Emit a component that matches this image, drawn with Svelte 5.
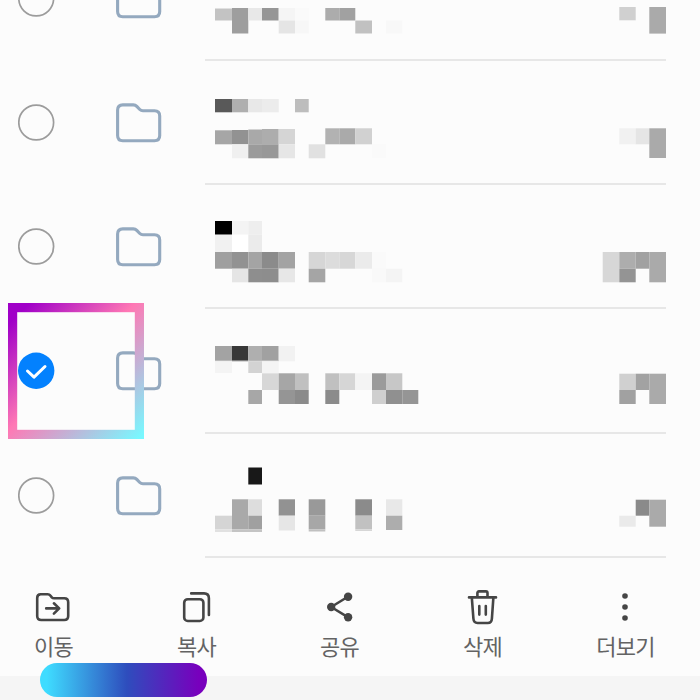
<script>
  // Column edges shared by all blurred-out names and counts
  const cols = [215, 232, 248.3, 262, 278.7, 295, 308.7, 325.3, 339.3, 355.3, 372, 386, 402.3, 418.3, 602.7, 619.3, 635.7, 649.3, 666];

  // block: [first column, last column, top, bottom, shade]
  let rows = [
    {
      selected: false,
      blocks: [
        [0, 1, 71.5, 83.5, '#c3c3c3'], [1, 2, 71, 96.5, '#9e9e9e'], [2, 3, 71, 83.5, '#e8e8e8'],
        [3, 4, 71, 83.5, '#969696'], [4, 5, 71, 83.5, '#f5f5f5'], [5, 6, 71, 83.5, '#fafafa'],
        [4, 5, 83.5, 96.5, '#e5e5e5'], [5, 6, 83.5, 96.5, '#f7f7f7'],
        [7, 8, 71, 83.5, '#acacac'], [8, 9, 71, 83.5, '#a1a1a1'], [9, 10, 83.5, 96.5, '#c1c1c1'],
        [11, 12, 83.5, 96.5, '#f8f8f8'],
        [15, 16, 70, 83.3, '#d0d0d0'], [17, 18, 70, 96.6, '#aaaaaa']
      ]
    },
    {
      selected: false,
      blocks: [
        [0, 1, 38, 51.3, '#595959'], [1, 2, 38, 51.3, '#afafaf'], [2, 3, 38, 51.3, '#e8e8e8'],
        [3, 4, 38, 51.3, '#ececec'], [5, 6, 38, 51.3, '#bdbdbd'],
        [0, 1, 69.3, 83.3, '#a6a6a6'], [1, 2, 69, 83.3, '#929292'], [2, 3, 68.5, 83.3, '#a9a9a9'],
        [3, 4, 68, 83.3, '#adadad'], [4, 5, 68, 83.3, '#d5d5d5'],
        [1, 2, 83.3, 97.3, '#f0f0f0'], [2, 3, 83.3, 97.3, '#9b9b9b'], [3, 4, 83.3, 97.3, '#989898'],
        [4, 5, 83.3, 97.3, '#e6e6e6'], [6, 7, 83.3, 97.3, '#e1e1e1'],
        [7, 8, 67.3, 83.3, '#b2b2b2'], [8, 9, 67.3, 83.3, '#aaaaaa'], [9, 10, 67.3, 83.3, '#d1d1d1'],
        [10, 11, 83.3, 97.3, '#fafafa'],
        [15, 16, 67.3, 83.3, '#f1f1f1'], [16, 17, 67.3, 83.3, '#e5e5e5'], [17, 18, 67.3, 97, '#aaaaaa']
      ]
    },
    {
      selected: false,
      blocks: [
        [0, 1, 36, 49.7, '#000000'], [1, 2, 36, 49.7, '#f4f4f4'], [2, 3, 36, 49.7, '#eeeeee'],
        [0, 1, 49.7, 67, '#f1f1f1'], [1, 2, 49.7, 67, '#ffffff'], [2, 3, 49.7, 67, '#ebebeb'],
        [0, 1, 67, 83.7, '#9f9f9f'], [1, 2, 67, 83.7, '#929292'], [2, 3, 67, 83.7, '#a4a4a4'],
        [3, 4, 67, 83.7, '#8b8b8b'], [4, 5, 67, 83.7, '#a3a3a3'],
        [1, 2, 83.7, 97.3, '#e5e5e5'], [2, 3, 83.7, 97.3, '#8e8e8e'], [3, 4, 83.7, 97.3, '#8d8d8d'],
        [4, 5, 83.7, 97.3, '#e7e7e7'],
        [6, 7, 67, 83.7, '#d6d6d6'], [7, 8, 67, 83.7, '#dcdcdc'], [8, 9, 67, 83.7, '#d7d7d7'],
        [9, 10, 67, 83.7, '#ebebeb'], [10, 11, 67, 83.7, '#fafafa'], [6, 7, 83.7, 97.3, '#a5a5a5'],
        [10, 11, 83.7, 97.3, '#f9f9f9'], [11, 12, 83.7, 97.3, '#f4f4f4'],
        [14, 15, 67, 97.3, '#d7d7d7'], [15, 16, 67, 83.7, '#adadad'], [16, 17, 67, 83.7, '#a1a1a1'],
        [15, 16, 83.7, 97.3, '#949494'], [17, 18, 67, 97.3, '#aaaaaa']
      ]
    },
    {
      selected: true,
      blocks: [
        [0, 1, 37, 51, '#a3a3a3'], [1, 2, 37, 51, '#383838'], [2, 3, 37, 51, '#afafaf'],
        [3, 4, 37, 51, '#a1a1a1'], [4, 5, 37, 52.3, '#f2f2f2'],
        [0, 1, 51, 52.3, '#bababa'], [1, 2, 51, 52.3, '#808080'], [2, 4, 51, 52.3, '#bababa'],
        [0, 1, 52.3, 64, '#f4f4f4'], [2, 3, 52.3, 64, '#d3d3d3'], [3, 4, 52.3, 64, '#f4f4f4'],
        [3, 4, 64.3, 81, '#d7d7d7'], [4, 5, 64.3, 81, '#a6a6a6'], [5, 6, 64.3, 81, '#c0c0c0'],
        [2, 3, 81, 95, '#a7a7a7'], [4, 5, 81, 95, '#959595'], [5, 6, 81, 95, '#8b8b8b'],
        [7, 8, 64.3, 81, '#c0c0c0'], [8, 9, 64.3, 81, '#d6d6d6'], [9, 10, 64.3, 81, '#f4f4f4'],
        [10, 11, 64.3, 81, '#9b9b9b'], [11, 12, 64.3, 81, '#c7c7c7'],
        [7, 8, 81, 95, '#8b8b8b'], [10, 11, 81, 95, '#cfcfcf'], [11, 12, 81, 95, '#909090'],
        [12, 13, 81, 95, '#959595'],
        [15, 16, 64.7, 81, '#d0d0d0'], [16, 17, 64.7, 81, '#a2a2a2'], [15, 16, 81, 95, '#a1a1a1'],
        [17, 18, 64.7, 95, '#aaaaaa']
      ]
    },
    {
      selected: false,
      blocks: [
        [2, 3, 33.5, 50.5, '#181818'],
        [0, 1, 81.7, 95.3, '#d5d5d5'], [0, 1, 95.3, 98, '#e1e1e1'],
        [1, 2, 65.3, 95.3, '#a9a9a9'], [2, 3, 65.3, 81.7, '#dddddd'], [2, 3, 81.7, 95.3, '#a0a0a0'],
        [1, 3, 95.3, 98, '#c4c4c4'],
        [4, 5, 65.3, 81.7, '#929292'], [4, 5, 81.7, 96.5, '#e6e6e6'],
        [6, 7, 65.3, 81.7, '#999999'], [6, 7, 81.7, 95.3, '#a7a7a7'], [6, 7, 95.3, 97.5, '#c0c0c0'],
        [9, 10, 65.3, 81.7, '#8b8b8b'], [9, 10, 81.7, 95.3, '#c1c1c1'], [9, 10, 95.3, 97, '#d6d6d6'],
        [11, 12, 65.3, 81.7, '#e8e8e8'], [11, 12, 81.7, 96, '#adadad'],
        [16, 17, 65.7, 81.7, '#8a8a8a'], [15, 16, 81.7, 92.7, '#eaeaea'], [17, 18, 65.7, 92.7, '#aaaaaa']
      ]
    }
  ];

  const actions = [
    { id: 'move', label: '이동' },
    { id: 'copy', label: '복사' },
    { id: 'share', label: '공유' },
    { id: 'delete', label: '삭제' },
    { id: 'more', label: '더보기' }
  ];

  function toggle(row) {
    row.selected = !row.selected;
    rows = rows;
  }
</script>

<div class="screen">
  <div class="list">
    {#each rows as row}
      <div class="row">
        <button class="check" class:selected={row.selected} on:click={() => toggle(row)} aria-label="select">
          <svg width="37" height="37" viewBox="0 0 37 37">
            {#if row.selected}
              <circle cx="18.2" cy="18.7" r="18.2" />
              <path d="M9.5 19 L16 25.2 L27 14.5" />
            {:else}
              <circle cx="18.2" cy="18.5" r="17.4" />
            {/if}
          </svg>
        </button>
        <svg class="folder" width="46" height="40" viewBox="0 0 46 40">
          <path d="M6.8 1.9 H17.3 Q19.4 1.9 20.8 3.4 L23.8 6.5 Q25.1 7.8 27 7.8 H38.5 Q43.7 7.8 43.7 13 V32.6 Q43.7 37.8 38.5 37.8 H6.8 Q1.6 37.8 1.6 32.6 V7.1 Q1.6 1.9 6.8 1.9 Z" />
        </svg>
        <div class="info">
          <svg width="461" height="110" viewBox="205 0 461 110">
            {#each row.blocks as [from, to, top, bottom, shade]}
              <rect x={cols[from]} y={top} width={cols[to] - cols[from]} height={bottom - top} fill={shade} />
            {/each}
          </svg>
        </div>
      </div>
    {/each}
  </div>

  <div class="toolbar">
    {#each actions as action}
      <button class="action">
        <svg class="icon" width="40" height="40" viewBox="0.8 0 40 40">
          {#if action.id === 'move'}
            <path d="M7.5 7.2 H14.5 Q16.2 7.2 17.2 8.6 L18.6 10.3 Q19.4 11.3 21 11.3 H31 Q35 11.3 35 15.3 V29 Q35 33 31 33 H8 Q4 33 4 29 V11 Q4 7.2 7.5 7.2 Z" />
            <path d="M13 21.4 H25.5 M20.7 16.3 L26 21.4 L20.7 26.6" />
          {:else if action.id === 'copy'}
            <rect x="8" y="12.2" width="19.2" height="21.8" rx="3.6" />
            <path d="M15 6.4 H27.8 Q32.7 6.4 32.7 11.3 V28" />
          {:else if action.id === 'share'}
            <path d="M29 9.5 L12 20 L29 30.3" />
            <circle class="dot" cx="28.9" cy="9.7" r="4.2" />
            <circle class="dot" cx="12" cy="20" r="4.2" />
            <circle class="dot" cx="28.9" cy="30.3" r="4.2" />
          {:else if action.id === 'delete'}
            <path d="M6.8 10.4 H33.8 M15.2 10 V6 Q15.2 4.4 16.8 4.4 H23.7 Q25.3 4.4 25.3 6 V10" />
            <path d="M9.6 10.4 L11.2 31.5 Q11.5 36 15.4 36 H25.6 Q29.5 36 29.7 31.5 L31.2 10.4 M17.1 19 V27.6 M23.6 19 V27.6" />
          {:else}
            <circle class="dot" cx="19.8" cy="9" r="2.8" />
            <circle class="dot" cx="19.8" cy="20" r="2.8" />
            <circle class="dot" cx="19.8" cy="31" r="2.8" />
          {/if}
        </svg>
        <span class="label">{action.label}</span>
      </button>
    {/each}
  </div>

  <svg class="highlight-box" width="136" height="136" viewBox="0 0 136 136">
    <defs>
      <linearGradient id="frame" gradientUnits="userSpaceOnUse" x1="0" y1="0" x2="136" y2="136">
        <stop offset="0.08" stop-color="#a000c8" />
        <stop offset="0.47" stop-color="#ff78b4" />
        <stop offset="0.98" stop-color="#78f8ff" />
      </linearGradient>
    </defs>
    <rect x="4.6" y="4.6" width="126.8" height="126.8" fill="none" stroke="url(#frame)" stroke-width="9.2" />
  </svg>
  <div class="highlight-pill"></div>
</div>

<style>
  :global(body) {
    margin: 0;
    background: #f5f5f5;
  }

  .screen {
    position: relative;
    width: 700px;
    height: 700px;
    overflow: hidden;
    background: #f5f5f5;
    font-family: 'Noto Sans CJK KR', sans-serif;
  }

  button {
    border: none;
    padding: 0;
    margin: 0;
    background: none;
    font: inherit;
    cursor: pointer;
  }

  .list {
    margin-top: -63px;
    background: #fcfcfc;
  }

  .row {
    display: flex;
    align-items: flex-start;
    height: 124px;
    box-sizing: border-box;
    padding-left: 18px;
  }

  .row:nth-child(4) {
    height: 125px;
  }

  .check {
    flex: none;
    width: 37px;
    height: 37px;
    margin-top: 43px;
  }

  .check svg {
    display: block;
    fill: none;
    stroke: #9c9c9c;
    stroke-width: 1.7;
  }

  .check.selected circle {
    fill: #0381fe;
    stroke: none;
  }

  .check.selected path {
    stroke: #fff;
    stroke-width: 3;
    stroke-linecap: round;
    stroke-linejoin: round;
  }

  .folder {
    flex: none;
    margin: 42px 43px 0 61px;
    fill: none;
    stroke: #94a9bf;
    stroke-width: 3.1;
    stroke-linejoin: round;
  }

  .info {
    width: 461px;
    height: 100%;
    box-sizing: border-box;
    border-bottom: 2px solid #e7e7e7;
  }

  .info svg {
    display: block;
  }

  .toolbar {
    display: grid;
    grid-template-columns: repeat(5, 143px);
    height: 118px;
    box-sizing: border-box;
    padding-top: 29px;
    background: #fcfcfc;
    margin-left: -18px;
    width: 718px;
  }

  .action {
    display: flex;
    flex-direction: column;
    align-items: center;
    justify-content: flex-start;
    height: 80px;
  }

  .icon {
    flex: none;
    fill: none;
    stroke: #454545;
    stroke-width: 2.6;
    stroke-linecap: round;
    stroke-linejoin: round;
  }

  .icon .dot {
    fill: #454545;
    stroke: none;
  }

  .label {
    margin-top: 2px;
    font-size: 22px;
    line-height: 32px;
    letter-spacing: -0.8px;
    color: #636363;
  }

  .highlight-box {
    position: absolute;
    left: 8px;
    top: 303px;
  }

  .highlight-pill {
    position: absolute;
    left: 40px;
    top: 663px;
    width: 167px;
    height: 34px;
    border-radius: 17px;
    background: linear-gradient(90deg, #3fdcff 4%, #2e4dbd 52%, #7800bd 95%);
  }
</style>
